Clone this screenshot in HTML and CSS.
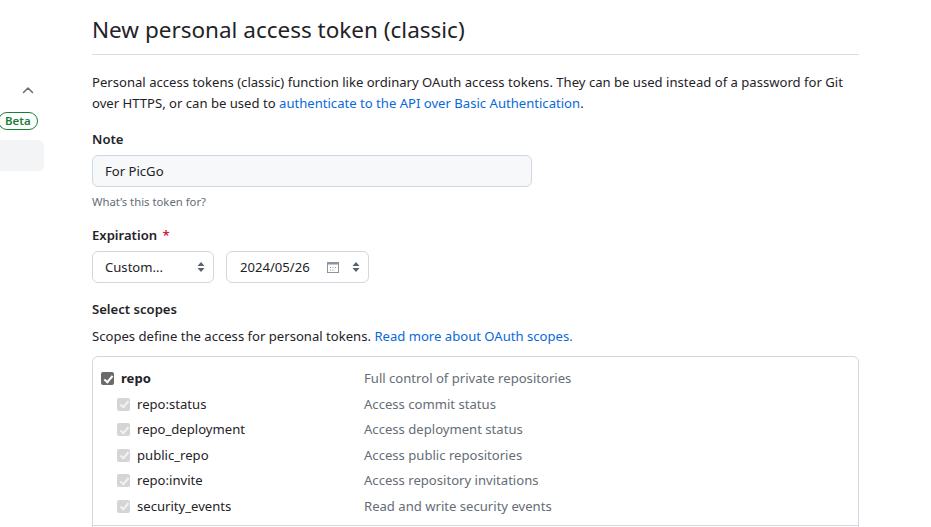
FILE: index.html
```html
<!DOCTYPE html>
<html lang="en">
<head>
<meta charset="utf-8">
<title>New personal access token (classic)</title>
<link rel="stylesheet" href="styles.css">
</head>
<body>
<div class="page">
  <aside class="side">
    <div class="chev">
      <svg width="12" height="8" viewBox="0 0 12 8"><path d="M1.5 6.5 6 2l4.5 4.5" fill="none" stroke="#656d76" stroke-width="1.5" stroke-linecap="round" stroke-linejoin="round"/></svg>
    </div>
    <div class="beta-row"><span class="beta">Beta</span></div>
    <div class="side-item"></div>
  </aside>
  <main class="main">
    <h1 class="title">New personal access token (classic)</h1>
    <p class="intro">Personal access tokens (classic) function like ordinary OAuth access tokens. They can be used instead of a password for Git over HTTPS, or can be used to <a href="#">authenticate to the API over Basic Authentication</a>.</p>

    <div class="field">
      <label class="label">Note</label>
      <div class="input">For PicGo</div>
      <div class="hint">What’s this token for?</div>
    </div>

    <div class="field exp">
      <label class="label">Expiration <span class="req">*</span></label>
      <div class="exp-row">
        <div class="select">
          <span>Custom...</span>
          <svg class="arrows" width="8" height="12" viewBox="0 0 8 12"><path d="M4 1 7.5 5h-7z M4 11 .5 7h7z" fill="#59636e"/></svg>
        </div>
        <div class="date">
          <span>2024/05/26</span>
          <svg class="cal" width="12" height="12" viewBox="0 0 12 12"><rect x="0.5" y="1.5" width="11" height="10" fill="none" stroke="#8c959f"/><rect x="0.5" y="1.5" width="11" height="2" fill="#8c959f"/><rect x="3" y="6" width="1" height="1" fill="#8c959f"/><rect x="5.5" y="6" width="1" height="1" fill="#8c959f"/><rect x="8" y="6" width="1" height="1" fill="#8c959f"/><rect x="3" y="8.5" width="1" height="1" fill="#8c959f"/><rect x="5.5" y="8.5" width="1" height="1" fill="#8c959f"/></svg>
          <svg class="arrows" width="8" height="12" viewBox="0 0 8 12"><path d="M4 1 7.5 5h-7z M4 11 .5 7h7z" fill="#59636e"/></svg>
        </div>
      </div>
    </div>

    <div class="field scopes">
      <div class="label">Select scopes</div>
      <p class="scopes-desc">Scopes define the access for personal tokens. <a href="#">Read more about OAuth scopes.</a></p>
      <div class="scope-box">
        <div class="group">
          <div class="row main-row">
            <span class="name"><span class="cb cb-on"></span><strong>repo</strong></span>
            <span class="desc">Full control of private repositories</span>
          </div>
          <div class="row sub">
            <span class="name"><span class="cb cb-dis"></span>repo:status</span>
            <span class="desc">Access commit status</span>
          </div>
          <div class="row sub">
            <span class="name"><span class="cb cb-dis"></span>repo_deployment</span>
            <span class="desc">Access deployment status</span>
          </div>
          <div class="row sub">
            <span class="name"><span class="cb cb-dis"></span>public_repo</span>
            <span class="desc">Access public repositories</span>
          </div>
          <div class="row sub">
            <span class="name"><span class="cb cb-dis"></span>repo:invite</span>
            <span class="desc">Access repository invitations</span>
          </div>
          <div class="row sub">
            <span class="name"><span class="cb cb-dis"></span>security_events</span>
            <span class="desc">Read and write security events</span>
          </div>
        </div>
        <div class="group next"></div>
      </div>
    </div>
  </main>
</div>
</body>
</html>
```

FILE: styles.css
```css
* { box-sizing: border-box; }
html, body { margin: 0; padding: 0; background: #fff; }
body {
  font-family: "Noto Sans", "Open Sans", sans-serif;
  font-size: 13.1px;
  line-height: 21px;
  color: #1f2328;
  overflow: hidden;
}
a { color: #0969da; text-decoration: none; }

.page { display: flex; gap: 48px; }

.side { width: 44px; flex: none; padding-top: 86px; }
.chev { display: flex; justify-content: flex-end; padding-right: 10px; height: 12px; }
.beta-row { margin-top: 12px; margin-left: -2px; }
.beta {
  display: inline-block;
  border: 1px solid #1a7f37;
  color: #1a7f37;
  border-radius: 10px;
  font-size: 11.5px;
  font-weight: 600;
  line-height: 16px;
  padding: 0 6px;
}
.side-item { margin-top: 9px; height: 31px; width: 44px; background: #f3f4f6; border-radius: 0 6px 6px 0; }

.main { width: 767px; flex: none; padding-top: 15px; }
.title {
  margin: 0;
  font-size: 22.5px;
  font-weight: 400;
  line-height: 30px;
  padding-bottom: 9px;
  border-bottom: 1px solid #d8dee4;
}
.intro { margin: 17px 0 0; }

.field { margin-top: 15px; }
.label { display: block; font-weight: 600; line-height: 21px; }
.input {
  margin-top: 5px;
  width: 440px;
  height: 32px;
  border: 1px solid #d0d7de;
  border-radius: 6px;
  background: #f6f8fa;
  padding: 0 12px;
  line-height: 30px;
}
.hint { font-size: 11.3px; color: #656d76; margin-top: 6px; line-height: 18px; }

.exp { margin-top: 14px; }
.req { color: #cf222e; margin-left: 2px; }
.exp-row { display: flex; gap: 12px; margin-top: 5px; }
.select, .date {
  height: 32px;
  border: 1px solid #d0d7de;
  border-radius: 6px;
  display: flex;
  align-items: center;
  padding: 0 8px 0 12px;
}
.select { width: 122px; justify-content: space-between; }
.date { width: 143px; padding-left: 13px; }
.date span { flex: 1; }
.cal { margin-right: 13px; }

.scopes { margin-top: 16px; }
.scopes-desc { margin: 6px 0 0; }
.scope-box {
  margin-top: 9px;
  border: 1px solid #d0d7de;
  border-radius: 6px;
}
.group { padding: 11px 0 8px 8px; border-bottom: 1px solid #d0d7de; }
.group.next { border-bottom: 0; height: 30px; }
.row { display: flex; line-height: 21px; }
.row.sub { margin-top: 4.5px; }
.name { width: 263px; display: flex; align-items: center; }
.sub .name { padding-left: 16px; }
.desc { color: #656d76; }
.cb {
  width: 13px; height: 13px;
  border-radius: 2px;
  margin-right: 7px;
  position: relative;
  flex: none;
}
.cb::after {
  content: "";
  position: absolute;
  left: 4.5px; top: 1.5px;
  width: 3px; height: 7px;
  border: solid #fff;
  border-width: 0 2px 2px 0;
  transform: rotate(40deg);
}
.cb-on { background: #6b6b6b; }
.cb-dis { background: #d5d5d5; }
.cb-dis::after { border-color: #f2f2f2; }
```
